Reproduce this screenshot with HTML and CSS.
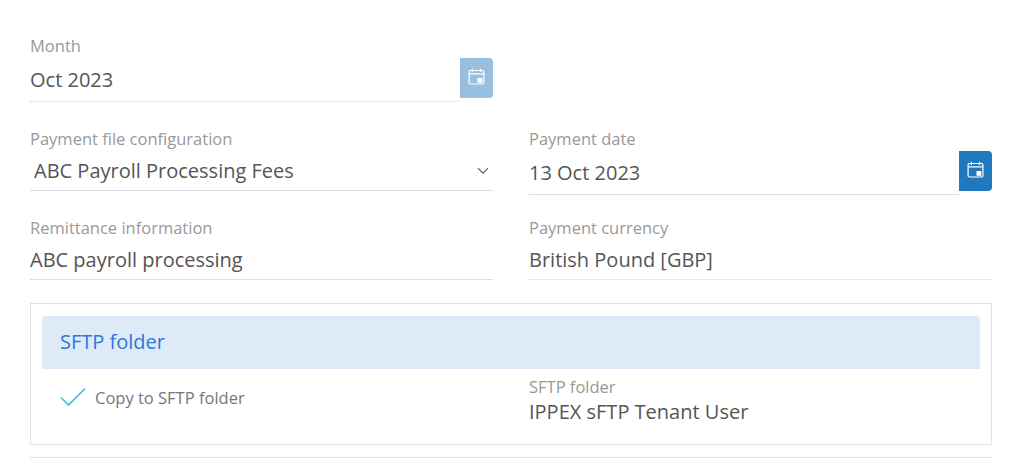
FILE: index.html
```html
<!DOCTYPE html>
<html>
<head>
    <title>Payment file</title>
    <link rel="stylesheet" href="styles.css">
</head>
<body>
    <form class="payment-form">
        <div class="form-row row-month">
            <div class="form-group">
                <label>Month</label>
                <div class="date-field">
                    <div class="value dotted">Oct 2023</div>
                    <button type="button" class="date-btn disabled">
                        <svg width="18" height="18" viewBox="0 0 18 18" fill="none" stroke="#fff" stroke-width="1.2">
                            <rect x="1.100" y="2.500" width="14.800" height="13.500" rx="1.200"/>
                            <path d="M1.100 5.800h14.800M4.400 0.800v3.200M12.600 0.800v3.200"/>
                            <rect x="9.500" y="10" width="4.800" height="4.800" fill="#fff" stroke="none"/>
                        </svg>
                    </button>
                </div>
            </div>
        </div>
        <div class="form-row row-config">
            <div class="form-group">
                <label>Payment file configuration</label>
                <div class="value select">
                    <span>ABC Payroll Processing Fees</span>
                    <svg width="12" height="8" viewBox="0 0 12 8" fill="none" stroke="#555" stroke-width="1.1">
                        <path d="M1 1.200l5 5 5-5"/>
                    </svg>
                </div>
            </div>
            <div class="form-group">
                <label>Payment date</label>
                <div class="date-field">
                    <div class="value solid">13 Oct 2023</div>
                    <button type="button" class="date-btn">
                        <svg width="18" height="18" viewBox="0 0 18 18" fill="none" stroke="#fff" stroke-width="1.2">
                            <rect x="1.100" y="2.500" width="14.800" height="13.500" rx="1.200"/>
                            <path d="M1.100 5.800h14.800M4.400 0.800v3.200M12.600 0.800v3.200"/>
                            <rect x="9.500" y="10" width="4.800" height="4.800" fill="#fff" stroke="none"/>
                        </svg>
                    </button>
                </div>
            </div>
        </div>
        <div class="form-row row-remit">
            <div class="form-group">
                <label>Remittance information</label>
                <div class="value solid short">ABC payroll processing</div>
            </div>
            <div class="form-group">
                <label>Payment currency</label>
                <div class="value dotted short">British Pound [GBP]</div>
            </div>
        </div>
        <section class="panel">
            <h2 class="panel-title">SFTP folder</h2>
            <div class="panel-body">
                <div class="check-field">
                    <svg width="26" height="20" viewBox="0 0 26 20" fill="none" stroke="#35c4d0" stroke-width="1.6">
                        <path d="M1 10.500l7.500 7.500L25 1.500"/>
                    </svg>
                    <span>Copy to SFTP folder</span>
                </div>
                <div class="folder-field">
                    <label>SFTP folder</label>
                    <div class="folder-name">IPPEX sFTP Tenant User</div>
                </div>
            </div>
        </section>
        <div class="panel-next"></div>
    </form>
</body>
</html>
```

FILE: styles.css
```css
html, body {
    height: 461px;
    overflow: hidden;
}
body {
    font-family: "Open Sans", Arial, sans-serif;
    margin: 0;
    padding: 35px 32px 0 30px;
    box-sizing: border-box;
    background-color: #fff;
    color: #555;
}
.form-row {
    display: grid;
    grid-template-columns: 463px 463px;
    column-gap: 36px;
}
.row-month {
    height: 93px;
}
.row-config {
    height: 89px;
}
.row-remit {
    height: 86px;
}
label {
    display: block;
    font-size: 16.5px;
    line-height: 22px;
    color: #999;
}
.value {
    font-size: 20px;
    line-height: 28px;
    color: #555;
}
.dotted {
    padding-top: 9px;
    height: 35px;
    border-bottom: 1px dotted #d4d4dc;
}
.solid {
    padding-top: 9px;
    height: 35px;
    border-bottom: 1px solid #dcdce6;
}
.short {
    padding-top: 7px;
    height: 33px;
}
.select {
    display: flex;
    justify-content: space-between;
    align-items: center;
    height: 38px;
    padding: 2px 4px 0 4px;
    border-bottom: 1px solid #dcdce6;
}
.date-field {
    display: flex;
    align-items: flex-start;
}
.date-field .value {
    flex: 1;
}
.date-btn {
    display: flex;
    align-items: center;
    justify-content: center;
    width: 33px;
    height: 40px;
    margin-top: 1px;
    padding: 0 0 2px;
    border: none;
    border-radius: 0 4px 4px 0;
    background-color: #2179bd;
}
.date-btn.disabled {
    background-color: #98bfe0;
}
.panel {
    height: 142px;
    padding: 12px 11px;
    border: 1px solid #e2e2e2;
    box-sizing: border-box;
}
.panel-title {
    margin: 0;
    padding: 0 18px;
    height: 53px;
    line-height: 51px;
    font-size: 20px;
    font-weight: normal;
    color: #2f78d6;
    background-color: #deeaf8;
    border-radius: 4px 4px 0 0;
}
.panel-body {
    display: grid;
    grid-template-columns: 487px 1fr;
    padding-top: 7px;
}
.check-field {
    display: flex;
    align-items: center;
    gap: 9px;
    padding: 9px 0 0 18px;
    height: 24px;
    font-size: 16.5px;
    color: #777;
}
.folder-field label {
    line-height: 22px;
}
.folder-name {
    font-size: 20px;
    line-height: 28px;
    color: #555;
}
.panel-next {
    height: 3px;
    margin-top: 12px;
    border-top: 1px solid #e2e2e2;
}
```
